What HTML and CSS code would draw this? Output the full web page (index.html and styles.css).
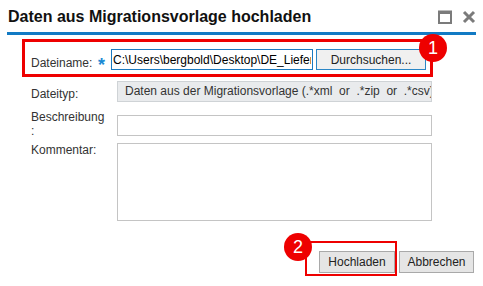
FILE: index.html
```html
<!DOCTYPE html>
<html lang="de">
<head>
    <meta charset="UTF-8">
    <meta name="viewport" content="width=device-width, initial-scale=1.0">
    <title>Daten aus Migrationsvorlage hochladen</title>
    <link rel="stylesheet" href="styles.css">
</head>
<body>

    <div class="dialog">
        <!-- Titelleiste -->
        <header class="titlebar">
            <h1>Daten aus Migrationsvorlage hochladen</h1>
            <div class="window-icons">
                <svg class="icon" width="14" height="14" viewBox="0 0 14 14">
                    <rect x="1" y="1.5" width="12" height="11.5" fill="none" stroke="#7b7b7b" stroke-width="2"/>
                    <rect x="1" y="1" width="12" height="3" fill="#7b7b7b"/>
                </svg>
                <svg class="icon" width="14" height="14" viewBox="0 0 14 14">
                    <path d="M2 2 L12 12 M12 2 L2 12" stroke="#7b7b7b" stroke-width="3" stroke-linecap="butt"/>
                </svg>
            </div>
        </header>

        <!-- Formular -->
        <form class="upload-form">
            <div class="row row-file marked">
                <label class="label label-file">Dateiname:</label>
                <span class="required">*</span>
                <input class="file-path" type="text" value="C:\Users\bergbold\Desktop\DE_Lieferanten.xml">
                <button type="button" class="btn-browse">Durchsuchen...</button>
            </div>

            <div class="row row-type">
                <label class="label label-type">Dateityp:</label>
                <div class="field readonly">Daten aus der Migrationsvorlage (.*xml&nbsp; or&nbsp; .*zip&nbsp; or&nbsp; .*csv)</div>
            </div>

            <div class="row row-desc">
                <label class="label">Beschreibung<br>:</label>
                <input class="field text-input" type="text">
            </div>

            <div class="row row-comment">
                <label class="label">Kommentar:</label>
                <textarea class="field comment"></textarea>
            </div>
        </form>

        <!-- Schaltflächen -->
        <div class="footer">
            <div class="marked marked-upload">
                <button type="button" class="btn">Hochladen</button>
            </div>
            <button type="button" class="btn btn-cancel">Abbrechen</button>
        </div>

        <!-- Markierungen -->
        <span class="badge badge-one">1</span>
        <span class="badge badge-two">2</span>
    </div>

</body>
</html>
```

FILE: styles.css
```css
/* Grundstil */
body {
    margin: 0;
    padding: 0;
    background-color: #ffffff;
    font-family: "Liberation Sans", Arial, sans-serif;
    font-size: 12px;
    color: #333333;
}

.dialog {
    position: relative;
    width: 483px;
    height: 286px;
    background-color: #ffffff;
}

/* Titelleiste */
.titlebar {
    display: flex;
    align-items: center;
    justify-content: space-between;
    height: 32px;
    margin: 0 7px;
    padding: 0 0 0 1px;
    border-bottom: 3px solid #127ac4;
}

.titlebar h1 {
    margin: 0;
    font-size: 16px;
    font-weight: bold;
    color: #111111;
    padding-top: 1px;
}

.window-icons {
    display: flex;
    gap: 10px;
    padding-top: 1px;
}

.icon {
    display: block;
}

/* Formular */
.upload-form {
    margin: 4px 50px 0 22px;
}

.row {
    display: flex;
    align-items: flex-start;
    padding-left: 9px;
}

.marked {
    border: 3px solid #ee0000;
}

.row-file {
    padding: 7px 4px 4px 6px;
}

.label {
    display: block;
    width: 86px;
    flex: none;
    line-height: 14px;
    color: #333333;
}

.label-file {
    width: 67px;
    margin-top: 7px;
}

.required {
    width: 13px;
    margin-top: 11px;
    color: #1a8ad4;
    font-size: 18px;
    font-weight: bold;
    line-height: 10px;
}

.file-path {
    box-sizing: border-box;
    width: 202px;
    height: 21px;
    margin: 0 3px 0 0;
    padding: 0 1px;
    border: 1px solid #1a7ac0;
    font-family: "Liberation Sans", Arial, sans-serif;
    font-size: 12px;
    color: #000000;
    outline: none;
}

.btn-browse {
    box-sizing: border-box;
    width: 110px;
    height: 21px;
    padding: 0;
    border: 1px solid #2a86c6;
    background-color: #f0f0f0;
    font-family: "Liberation Sans", Arial, sans-serif;
    font-size: 12px;
    color: #222222;
}

.row-type {
    margin-top: 4px;
    padding-right: 1px;
}

.label-type {
    margin-top: 6px;
}

.field {
    box-sizing: border-box;
    width: 315px;
    margin: 0;
}

.readonly {
    height: 21px;
    padding: 0 0 0 7px;
    border: 1px solid #cfd3d6;
    background-color: #e9ebed;
    line-height: 19px;
    color: #333333;
    white-space: nowrap;
    overflow: hidden;
}

.row-desc {
    margin-top: 8px;
}

.text-input {
    height: 21px;
    margin-top: 5px;
    border: 1px solid #c4c4c4;
    outline: none;
}

.row-comment {
    margin-top: 5px;
}

.comment {
    height: 78px;
    border: 1px solid #c4c4c4;
    resize: none;
    outline: none;
}

/* Schaltflächen */
.footer {
    display: flex;
    align-items: flex-end;
    justify-content: flex-end;
    gap: 2px;
    margin: 20px 9px 0 0;
}

.marked-upload {
    border-width: 2px;
    padding: 8px 0 1px 12px;
}

.btn {
    box-sizing: border-box;
    display: block;
    width: 76px;
    height: 22px;
    padding: 0;
    border: 1px solid #a9a9a9;
    background-color: #e5e5e5;
    font-family: "Liberation Sans", Arial, sans-serif;
    font-size: 12px;
    color: #222222;
}

.btn-cancel {
    width: 75px;
    margin-bottom: 3px;
}

/* Nummerierte Markierungen */
.badge {
    position: absolute;
    width: 28px;
    height: 28px;
    border-radius: 50%;
    background-color: #ee0000;
    color: #ffffff;
    font-size: 18px;
    line-height: 28px;
    text-align: center;
}

.badge-one {
    left: 419px;
    top: 34px;
}

.badge-two {
    left: 284px;
    top: 233px;
}
```
